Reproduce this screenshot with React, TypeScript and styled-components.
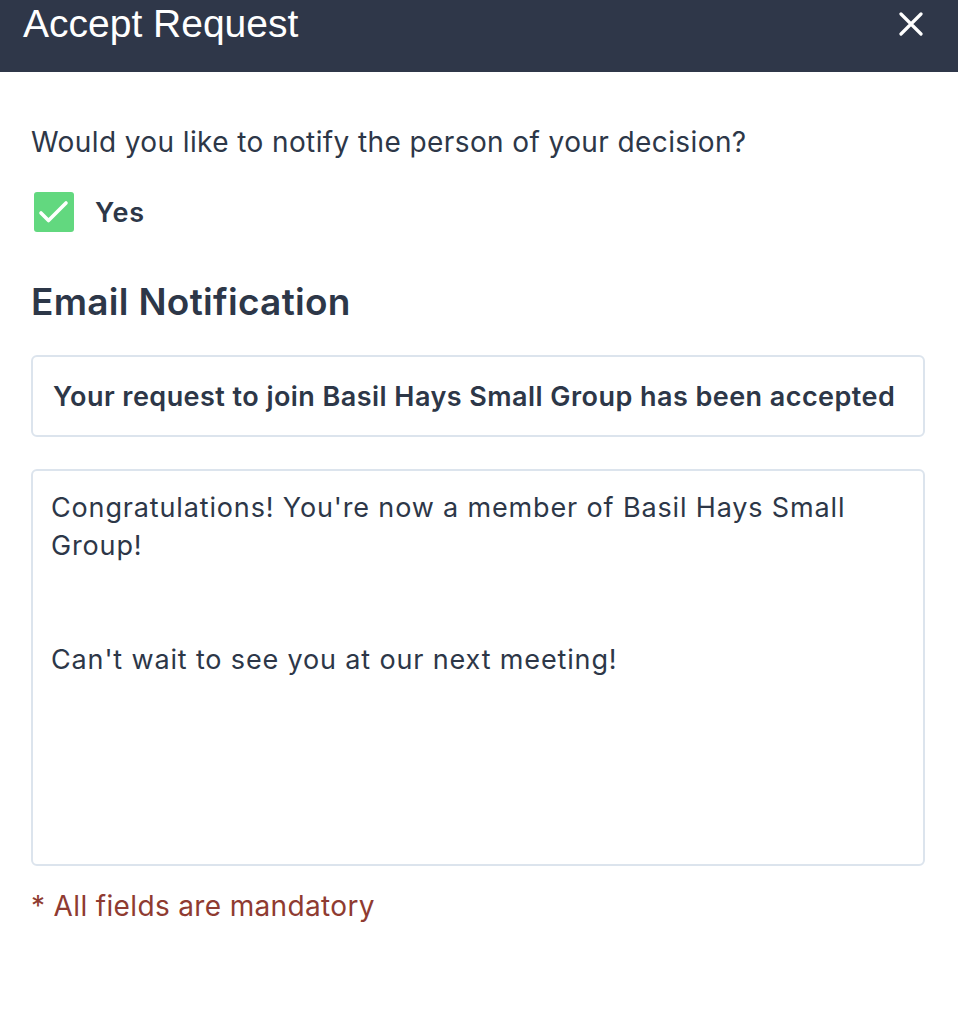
import React from 'react'
import styled, { createGlobalStyle } from 'styled-components'

const GlobalStyle = createGlobalStyle`
  * { box-sizing: border-box; }
  body {
    margin: 0;
    background: #ffffff;
    font-family: Inter, "Noto Sans", sans-serif;
    color: #2d3748;
  }
`

const Header = styled.header`
  height: 72px;
  background: #2f3749;
  display: flex;
  align-items: flex-start;
  justify-content: space-between;
  padding: 0 34px 0 23px;
`

const Title = styled.h1`
  margin: 0;
  font-family: "Liberation Sans", Arial, sans-serif;
  font-weight: 400;
  font-size: 39px;
  line-height: 48px;
  color: #ffffff;
`

const CloseButton = styled.button`
  margin-top: 11px;
  width: 26px;
  height: 26px;
  padding: 0;
  border: 0;
  background: none;
  display: flex;
  align-items: center;
  justify-content: center;
  cursor: pointer;
`

const Body = styled.div`
  padding: 50px 33px 0 31px;
  display: flex;
  flex-direction: column;
`

const Question = styled.p`
  margin: 0;
  font-size: 28px;
  letter-spacing: 0.4px;
  line-height: 40px;
`

const CheckRow = styled.label`
  margin-top: 30px;
  display: flex;
  align-items: center;
  gap: 21px;
  padding-left: 3px;
  font-size: 27px;
  letter-spacing: 0.8px;
  font-weight: 600;
`

const CheckBox = styled.span`
  width: 40px;
  height: 40px;
  border-radius: 3px;
  background: #62d87f;
  display: flex;
`

const Heading = styled.h2`
  margin: 48px 0 0;
  font-size: 37px;
  letter-spacing: 0.3px;
  line-height: 44px;
  font-weight: 600;
`

const Subject = styled.input`
  margin-top: 31px;
  height: 82px;
  width: 100%;
  border: 2px solid #dce4ed;
  border-radius: 6px;
  padding: 0 20px;
  font-family: inherit;
  font-size: 27px;
  letter-spacing: 0.45px;
  font-weight: 600;
  color: #2d3748;
  outline: none;
`

const Message = styled.textarea`
  margin-top: 32px;
  height: 397px;
  width: 100%;
  border: 2px solid #dce4ed;
  border-radius: 6px;
  padding: 18px 18px;
  font-family: inherit;
  font-size: 27px;
  letter-spacing: 0.85px;
  line-height: 38px;
  color: #2d3748;
  resize: none;
  outline: none;
  display: block;
`

const Mandatory = styled.p`
  margin: 20px 0 0;
  font-size: 28px;
  letter-spacing: 0.35px;
  line-height: 40px;
  color: #8f3b31;
`

const message =
  "Congratulations! You're now a member of Basil Hays Small Group!\n\n\nCan't wait to see you at our next meeting!"

export default function App() {
  return (
    <>
      <GlobalStyle />
      <Header>
        <Title>Accept Request</Title>
        <CloseButton aria-label="Close">
          <svg width="24" height="24" viewBox="0 0 24 24">
            <path d="M2 2L22 22M22 2L2 22" stroke="#fff" strokeWidth="3.2" strokeLinecap="round" />
          </svg>
        </CloseButton>
      </Header>
      <Body>
        <Question>Would you like to notify the person of your decision?</Question>
        <CheckRow>
          <CheckBox>
            <svg width="40" height="40" viewBox="0 0 40 40">
              <path d="M7 21L14.5 28.5L32 11" fill="none" stroke="#fff" strokeWidth="3.6" strokeLinecap="round" strokeLinejoin="round" />
            </svg>
          </CheckBox>
          Yes
        </CheckRow>
        <Heading>Email Notification</Heading>
        <Subject readOnly value="Your request to join Basil Hays Small Group has been accepted" />
        <Message readOnly value={message} />
        <Mandatory>* All fields are mandatory</Mandatory>
      </Body>
    </>
  )
}
